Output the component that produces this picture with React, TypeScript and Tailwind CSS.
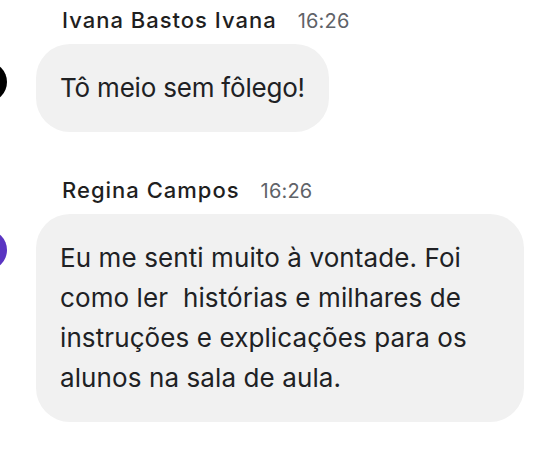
import React from "react";

const font = { fontFamily: "Inter, 'Noto Sans', sans-serif" };

function NameRow({ name, time }: { name: string; time: string }) {
  return (
    <div className="flex items-baseline gap-[21px] pl-[62px] h-[36px] pt-[4px]">
      <span className="text-[22px] font-medium text-[#1f1f1f] tracking-[1px]">{name}</span>
      <span className="text-[20px] text-[#5f6368] tracking-[0.2px]">{time}</span>
    </div>
  );
}

export default function App() {
  return (
    <div className="w-[542px] h-[452px] bg-white overflow-hidden" style={font}>
      <NameRow name="Ivana Bastos Ivana" time="16:26" />
      <div className="flex items-start mt-[8px]">
        <div className="w-[40px] h-[40px] rounded-full bg-black shrink-0 ml-[-33px] mt-[18px]" />
        <div className="ml-[29px] rounded-[34px] bg-[#f1f1f1] px-[24px] py-[24px] text-[26px] leading-[40px] text-[#202124] tracking-[-0.2px]">
          Tô meio sem fôlego!
        </div>
      </div>
      <div className="mt-[38px]">
        <NameRow name="Regina Campos" time="16:26" />
      </div>
      <div className="flex items-start mt-[8px]">
        <div className="w-[40px] h-[40px] rounded-full bg-[#5a35c2] shrink-0 ml-[-33px] mt-[16px]" />
        <div className="ml-[29px] w-[488px] rounded-[34px] bg-[#f1f1f1] px-[24px] py-[24px] text-[26px] leading-[40px] text-[#202124] tracking-[0.1px]">
          Eu me senti muito à vontade. Foi
          <br />
          como ler&nbsp; histórias e milhares de
          <br />
          instruções e explicações para os
          <br />
          alunos na sala de aula.
        </div>
      </div>
    </div>
  );
}
